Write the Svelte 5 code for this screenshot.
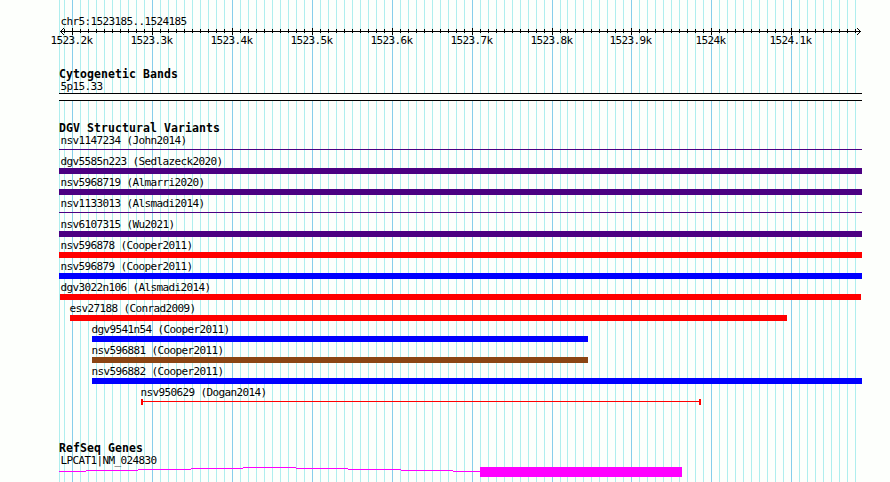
<script>
	const LEFT = 59;

	const title = 'chr5:1523185..1524185';

	const majorTicks = [
		{ x: 72, label: '1523.2k' },
		{ x: 152, label: '1523.3k' },
		{ x: 232, label: '1523.4k' },
		{ x: 312, label: '1523.5k' },
		{ x: 392, label: '1523.6k' },
		{ x: 472, label: '1523.7k' },
		{ x: 552, label: '1523.8k' },
		{ x: 631, label: '1523.9k' },
		{ x: 711, label: '1524k' },
		{ x: 791, label: '1524.1k' }
	];

	// one tick every 10 bp, 8px apart; rounding drops a pixel after 560
	const ticks = Array.from({ length: 100 }, (_, i) => {
		const x = 64 + i * 8;
		return x > 560 ? x - 1 : x;
	});

	const variants = [
		{ name: 'nsv1147234 (John2014)', start: 59, end: 862, color: '#4b0082', type: 'line' },
		{ name: 'dgv5585n223 (Sedlazeck2020)', start: 59, end: 862, color: '#4b0082', type: 'bar' },
		{ name: 'nsv5968719 (Almarri2020)', start: 59, end: 862, color: '#4b0082', type: 'bar' },
		{ name: 'nsv1133013 (Alsmadi2014)', start: 59, end: 862, color: '#4b0082', type: 'line' },
		{ name: 'nsv6107315 (Wu2021)', start: 59, end: 862, color: '#4b0082', type: 'bar' },
		{ name: 'nsv596878 (Cooper2011)', start: 59, end: 862, color: '#ff0000', type: 'bar' },
		{ name: 'nsv596879 (Cooper2011)', start: 59, end: 862, color: '#0000ff', type: 'bar' },
		{ name: 'dgv3022n106 (Alsmadi2014)', start: 60, end: 861, color: '#ff0000', type: 'bar' },
		{ name: 'esv27188 (Conrad2009)', start: 70, end: 787, color: '#ff0000', type: 'bar' },
		{ name: 'dgv9541n54 (Cooper2011)', start: 92, end: 588, color: '#0000ff', type: 'bar' },
		{ name: 'nsv596881 (Cooper2011)', start: 92, end: 588, color: '#8b4513', type: 'bar' },
		{ name: 'nsv596882 (Cooper2011)', start: 92, end: 862, color: '#0000ff', type: 'bar' },
		{ name: 'nsv950629 (Dogan2014)', start: 141, end: 701, color: '#ff0000', type: 'range' }
	];

	// intron drawn as a shallow stepped arc, y relative to the glyph row
	const intron = [
		{ x: 59, y: 4 },
		{ x: 86, y: 3 },
		{ x: 138, y: 2 },
		{ x: 191, y: 1 },
		{ x: 243, y: 0 },
		{ x: 296, y: 1 },
		{ x: 348, y: 2 },
		{ x: 401, y: 3 },
		{ x: 453, y: 4 }
	];
	const exon = { start: 480, end: 682 };

	function isMajor(x) {
		return majorTicks.some((t) => t.x === x);
	}

	function labelX(start) {
		return start <= 60 ? 60.5 : start - 0.5;
	}

	function stepEnd(i) {
		return i + 1 < intron.length ? intron[i + 1].x : exon.start;
	}
</script>

<div class="browser">
	<svg class="grid" width="890" height="482" shape-rendering="crispEdges">
		<rect x={LEFT} y="0" width="1" height="482" fill="#afeeee" />
		{#each ticks as x}
			<rect {x} y="0" width="1" height="482" fill={isMajor(x) ? '#87ceeb' : '#afeeee'} />
		{/each}
	</svg>

	<header>
		<div class="label region">{title}</div>
		<svg class="ruler" width="890" height="22" shape-rendering="crispEdges">
			<rect x="60" y="4" width="801" height="1" />
			<path d="M60 4h1v1h-1zM61 3h1v3h-1zM62 2h1v1h-1zM62 6h1v1h-1zM63 1h1v1h-1zM63 7h1v1h-1z" />
			<path d="M860 4h1v1h-1zM859 3h1v3h-1zM858 2h1v1h-1zM858 6h1v1h-1zM857 1h1v1h-1zM857 7h1v1h-1z" />
			{#each ticks as x}
				{#if isMajor(x)}
					<rect {x} y="1" width="1" height="7" />
				{:else}
					<rect {x} y="2" width="1" height="4" />
				{/if}
			{/each}
			{#each majorTicks as tick}
				<text x={tick.x - tick.label.length * 3 - 0.5} y="17">{tick.label}</text>
			{/each}
		</svg>
	</header>

	<section class="bands">
		<h2>Cytogenetic Bands</h2>
		<div class="label">5p15.33</div>
		<div class="band"></div>
	</section>

	<section class="variants">
		<h2>DGV Structural Variants</h2>
		{#each variants as v}
			<div class="feature">
				<div class="label" style="padding-left: {labelX(v.start)}px">{v.name}</div>
				<div
					class="glyph {v.type}"
					style="margin-left: {v.start}px; width: {v.end - v.start}px; color: {v.color}"
				></div>
			</div>
		{/each}
	</section>

	<section class="genes">
		<h2>RefSeq Genes</h2>
		<div class="label">LPCAT1|NM_024830</div>
		<svg class="gene" width="890" height="10" shape-rendering="crispEdges">
			{#each intron as step, i}
				<rect x={step.x} y={step.y} width={stepEnd(i) - step.x} height="1" />
			{/each}
			<rect x={exon.start} y="0" width={exon.end - exon.start} height="10" />
		</svg>
	</section>
</div>

<style>
	:global(body) {
		margin: 0;
		background: #fdfffc;
	}

	.browser {
		position: relative;
		width: 890px;
		height: 482px;
		overflow: hidden;
		color: #000;
		font-family: 'DejaVu Sans Mono', 'Liberation Mono', monospace;
	}

	.grid {
		position: absolute;
		top: 0;
		left: 0;
	}

	header,
	section {
		position: relative;
	}

	svg {
		display: block;
	}

	.label,
	.ruler text {
		font-size: 11px;
		letter-spacing: -0.622px;
	}

	.label {
		height: 12px;
		line-height: 12px;
		padding-left: 60.5px;
		white-space: pre;
	}

	h2 {
		margin: 0;
		height: 13px;
		padding-left: 59px;
		font-size: 11.5px;
		line-height: 13px;
		letter-spacing: 0.077px;
		font-weight: bold;
		white-space: pre;
	}

	header {
		height: 68px;
	}

	.label.region {
		height: 11px;
		padding-top: 16px;
	}

	.bands {
		height: 54px;
	}

	.band {
		box-sizing: border-box;
		height: 8px;
		width: 803px;
		margin-left: 59px;
		border-top: 1px solid #000;
		border-bottom: 1px solid #000;
		background: #fdfffc;
	}

	.variants {
		height: 320px;
	}

	/* flow-root keeps the thin line's offset inside its row */
	.feature {
		display: flow-root;
		height: 21px;
	}

	.glyph {
		box-sizing: border-box;
		height: 6px;
	}

	.bar {
		background: currentColor;
	}

	.line {
		height: 1px;
		margin-top: 2px;
		background: currentColor;
	}

	.range {
		border-left: 2px solid;
		border-right: 2px solid;
		background: linear-gradient(currentColor, currentColor) 0 2px / 100% 1px no-repeat;
	}

	.gene {
		fill: #f0f;
	}
</style>
